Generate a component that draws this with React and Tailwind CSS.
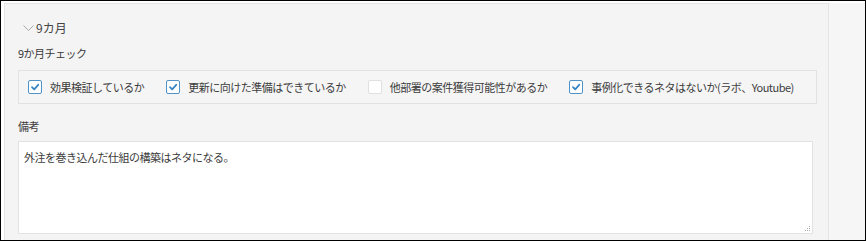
import React from "react";

const font = {
  fontFamily: '"Noto Sans CJK JP", "Noto Sans", sans-serif',
};

function CheckItem({ label, checked }) {
  return (
    <label className="flex items-center gap-[8px] shrink-0">
      <span
        className={
          "w-[14px] h-[14px] rounded-[2px] border bg-white flex items-center justify-center " +
          (checked ? "border-[#4f93c9]" : "border-[#e0e0e0]")
        }
      >
        {checked && (
          <svg width="10" height="10" viewBox="0 0 10 10">
            <polyline
              points="2,5.2 4.2,7.4 8.2,2.8"
              fill="none"
              stroke="#3a86c4"
              strokeWidth="1.8"
              strokeLinecap="round"
              strokeLinejoin="round"
            />
          </svg>
        )}
      </span>
      <span className="text-[11px] tracking-[-0.5px] text-[#3c3c3c] leading-[16px]">
        {label}
      </span>
    </label>
  );
}

export default function App() {
  const items = [
    { label: "効果検証しているか", checked: true },
    { label: "更新に向けた準備はできているか", checked: true },
    { label: "他部署の案件獲得可能性があるか", checked: false },
    { label: "事例化できるネタはないか(ラボ、Youtube)", checked: true },
  ];

  return (
    <div
      style={font}
      className="w-[866px] h-[241px] border border-black bg-white pt-[2px] pl-[3px] flex overflow-hidden"
    >
      <div className="w-[825px] shrink-0 border-l border-t border-r border-[#e4e4e4] bg-[#f4f4f4] pt-[14px] px-[13px]">
        {/* 見出し */}
        <div className="h-[20px] flex items-center pl-[5px] text-[12px] text-[#444]">
          <svg width="11" height="7" viewBox="0 0 11 7" className="mr-[2px]">
            <polyline
              points="0.5,0.5 5.5,5.5 10.5,0.5"
              fill="none"
              stroke="#aaa"
              strokeWidth="1"
            />
          </svg>
          <span>9カ月</span>
        </div>

        <div className="mt-[7px] h-[16px] leading-[16px] text-[11px] tracking-[-0.5px] text-[#3c3c3c]">
          9か月チェック
        </div>

        {/* チェック項目 */}
        <div className="mt-[9px] w-[799px] h-[34px] border border-[#e2e2e2] bg-[#f5f5f5] flex items-center pl-[9px] gap-[22px]">
          {items.map((it) => (
            <CheckItem key={it.label} label={it.label} checked={it.checked} />
          ))}
        </div>

        <div className="mt-[14px] h-[16px] leading-[16px] text-[11px] tracking-[-0.5px] text-[#3c3c3c]">
          備考
        </div>

        {/* 備考欄 */}
        <div className="relative mt-[7px] w-[795px] h-[93px] border border-[#e2e2e2] bg-white pt-[7px] pl-[5px]">
          <p className="text-[11px] tracking-[-0.5px] leading-[16px] text-[#3c3c3c]">
            外注を巻き込んだ仕組の構築はネタになる。
          </p>
          <svg
            width="7"
            height="7"
            viewBox="0 0 7 7"
            className="absolute right-[1px] bottom-[1px]"
          >
            <rect x="5" y="1" width="1" height="1" fill="#aaa" />
            <rect x="3" y="3" width="1" height="1" fill="#aaa" />
            <rect x="5" y="3" width="1" height="1" fill="#aaa" />
            <rect x="1" y="5" width="1" height="1" fill="#aaa" />
            <rect x="3" y="5" width="1" height="1" fill="#aaa" />
            <rect x="5" y="5" width="1" height="1" fill="#aaa" />
          </svg>
        </div>
      </div>
      <div className="flex-1 bg-[#f6f6f6]" />
    </div>
  );
}
